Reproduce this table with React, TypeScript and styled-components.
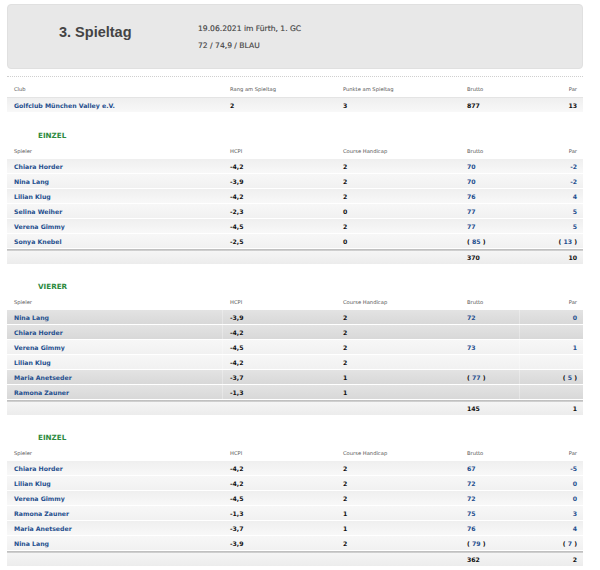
import React from "react";
import styled, { createGlobalStyle, css } from "styled-components";

const Global = createGlobalStyle`
  html, body { margin: 0; padding: 0; background: #ffffff; }
  body { font-family: "DejaVu Sans", Verdana, sans-serif; }
`;

const Page = styled.div`
  width: 576px;
  padding: 4px 0 0 7px;
`;

const HeaderBox = styled.div`
  height: 65px;
  box-sizing: border-box;
  background: #e8e8e8;
  border: 1px solid #e0e0e0;
  border-radius: 4px;
  display: flex;
  align-items: flex-start;
  padding-left: 51px;
`;

const Title = styled.h1`
  margin: 0;
  width: 139px;
  padding-top: 19px;
  font-family: "Liberation Sans", Arial, sans-serif;
  font-size: 14.5px;
  line-height: 17px;
  font-weight: bold;
  color: #444444;
`;

const Info = styled.div`
  display: flex;
  flex-direction: column;
  gap: 8px;
  padding-top: 19px;
  font-size: 7.6px;
  line-height: 9px;
  color: #444444;
  -webkit-text-stroke: 0.15px #444444;
`;

const Dotted = styled.div`
  margin-top: 7px;
  border-top: 1px dotted #cfcfcf;
`;

const Grid = css`
  display: grid;
  grid-template-columns: 216px 113px 124px 60px 63px;
`;

const LabelRow = styled.div<{ $h: number }>`
  ${Grid};
  height: ${(p) => p.$h}px;
  box-sizing: border-box;
  align-items: end;
  padding-bottom: 4px;
  font-size: 5.2px;
  line-height: 7px;
  color: #555555;
`;

const ClubLabelRow = styled(LabelRow)`
  border-bottom: 1px solid #e4e4e4;
`;

const Label = styled.div<{ $right?: boolean }>`
  padding: 0 ${(p) => (p.$right ? 6 : 0)}px 0 7px;
  text-align: ${(p) => (p.$right ? "right" : "left")};
`;

type Tone = "light" | "dark" | "pale";

const toneBg: Record<Tone, string> = {
  light: "linear-gradient(#efefef, #f8f8f8)",
  pale: "linear-gradient(#f7f7f7, #f1f1f1)",
  dark: "linear-gradient(#e3e3e3, #d8d8d8)",
};

const Row = styled.div<{ $tone: Tone }>`
  ${Grid};
  height: 15px;
  box-sizing: border-box;
  align-items: center;
  background: ${(p) => toneBg[p.$tone]};
  border-bottom: 1px solid #ffffff;
  font-size: 6.2px;
  font-weight: bold;
  color: #111111;
`;

const Cell = styled.div<{ $right?: boolean; $blue?: boolean; $divider?: boolean }>`
  height: 100%;
  display: flex;
  align-items: center;
  justify-content: ${(p) => (p.$right ? "flex-end" : "flex-start")};
  padding: 0 ${(p) => (p.$right ? 6 : 0)}px 0 7px;
  color: ${(p) => (p.$blue ? "#1f4f8e" : "#111111")};
  border-right: ${(p) => (p.$divider ? "1px solid rgba(255,255,255,0.3)" : "none")};
  white-space: pre;
`;

const Blue = styled.span`
  color: #1f4f8e;
`;

const Separator = styled.div`
  height: 2px;
  background: linear-gradient(#b9b9b9, #d6d6d6);
`;

const TotalRow = styled.div`
  ${Grid};
  height: 13px;
  align-items: center;
  background: linear-gradient(#f5f5f5, #ececec);
  font-size: 6.2px;
  font-weight: bold;
  color: #111111;
`;

const Section = styled.section`
  margin-top: 14px;
`;

const Heading = styled.h2`
  margin: 0;
  height: 16px;
  display: flex;
  align-items: center;
  padding-left: 31px;
  font-size: 7.2px;
  font-weight: bold;
  color: #2d8a3e;
`;

type Player = {
  name: string;
  hcpi: string;
  ch: string;
  brutto?: string;
  par?: string;
  streich?: boolean;
  tone: Tone;
};

type SectionData = {
  title: string;
  players: Player[];
  total: [string, string];
  vierer?: boolean;
};

const einzelTone = (i: number): Tone => (i % 2 === 0 ? "light" : "pale");

const sections: SectionData[] = [
  {
    title: "EINZEL",
    players: [
      { name: "Chiara Horder", hcpi: "-4,2", ch: "2", brutto: "70", par: "-2" },
      { name: "Nina Lang", hcpi: "-3,9", ch: "2", brutto: "70", par: "-2" },
      { name: "Lilian Klug", hcpi: "-4,2", ch: "2", brutto: "76", par: "4" },
      { name: "Selina Weiher", hcpi: "-2,3", ch: "0", brutto: "77", par: "5" },
      { name: "Verena Gimmy", hcpi: "-4,5", ch: "2", brutto: "77", par: "5" },
      { name: "Sonya Knebel", hcpi: "-2,5", ch: "0", brutto: "85", par: "13", streich: true },
    ].map((p, i) => ({ ...p, tone: einzelTone(i) })),
    total: ["370", "10"],
  },
  {
    title: "VIERER",
    vierer: true,
    players: [
      { name: "Nina Lang", hcpi: "-3,9", ch: "2", brutto: "72", par: "0", tone: "dark" },
      { name: "Chiara Horder", hcpi: "-4,2", ch: "2", tone: "dark" },
      { name: "Verena Gimmy", hcpi: "-4,5", ch: "2", brutto: "73", par: "1", tone: "pale" },
      { name: "Lilian Klug", hcpi: "-4,2", ch: "2", tone: "pale" },
      { name: "Maria Anetseder", hcpi: "-3,7", ch: "1", brutto: "77", par: "5", streich: true, tone: "dark" },
      { name: "Ramona Zauner", hcpi: "-1,3", ch: "1", tone: "dark" },
    ],
    total: ["145", "1"],
  },
  {
    title: "EINZEL",
    players: [
      { name: "Chiara Horder", hcpi: "-4,2", ch: "2", brutto: "67", par: "-5" },
      { name: "Lilian Klug", hcpi: "-4,2", ch: "2", brutto: "72", par: "0" },
      { name: "Verena Gimmy", hcpi: "-4,5", ch: "2", brutto: "72", par: "0" },
      { name: "Ramona Zauner", hcpi: "-1,3", ch: "1", brutto: "75", par: "3" },
      { name: "Maria Anetseder", hcpi: "-3,7", ch: "1", brutto: "76", par: "4" },
      { name: "Nina Lang", hcpi: "-3,9", ch: "2", brutto: "79", par: "7", streich: true },
    ].map((p, i) => ({ ...p, tone: einzelTone(i) })),
    total: ["362", "2"],
  },
];

const Score: React.FC<{ value?: string; streich?: boolean }> = ({ value, streich }) => {
  if (!value) return null;
  if (streich)
    return (
      <>
        {"( "}
        <Blue>{value}</Blue>
        {" )"}
      </>
    );
  return <Blue>{value}</Blue>;
};

const PlayerTable: React.FC<{ data: SectionData }> = ({ data }) => (
  <Section>
    <Heading>{data.title}</Heading>
    <LabelRow $h={16}>
      <Label>Spieler</Label>
      <Label>HCPI</Label>
      <Label>Course Handicap</Label>
      <Label>Brutto</Label>
      <Label $right>Par</Label>
    </LabelRow>
    {data.players.map((p, i) => (
      <Row key={i} $tone={p.tone}>
        <Cell $blue $divider={data.vierer}>{p.name}</Cell>
        <Cell>{p.hcpi}</Cell>
        <Cell>{p.ch}</Cell>
        <Cell $divider={data.vierer}>
          <Score value={p.brutto} streich={p.streich} />
        </Cell>
        <Cell $right>
          <Score value={p.par} streich={p.streich} />
        </Cell>
      </Row>
    ))}
    <Separator />
    <TotalRow>
      <Cell />
      <Cell />
      <Cell />
      <Cell>{data.total[0]}</Cell>
      <Cell $right>{data.total[1]}</Cell>
    </TotalRow>
  </Section>
);

export default function App() {
  return (
    <>
      <Global />
      <Page>
        <HeaderBox>
          <Title>3. Spieltag</Title>
          <Info>
            <span>19.06.2021 im Fürth, 1. GC</span>
            <span>72 / 74,9 / BLAU</span>
          </Info>
        </HeaderBox>
        <Dotted />
        <ClubLabelRow $h={21}>
          <Label>Club</Label>
          <Label>Rang am Spieltag</Label>
          <Label>Punkte am Spieltag</Label>
          <Label>Brutto</Label>
          <Label $right>Par</Label>
        </ClubLabelRow>
        <Row $tone="light">
          <Cell $blue>Golfclub München Valley e.V.</Cell>
          <Cell>2</Cell>
          <Cell>3</Cell>
          <Cell>877</Cell>
          <Cell $right>13</Cell>
        </Row>
        {sections.map((s, i) => (
          <PlayerTable key={i} data={s} />
        ))}
      </Page>
    </>
  );
}
